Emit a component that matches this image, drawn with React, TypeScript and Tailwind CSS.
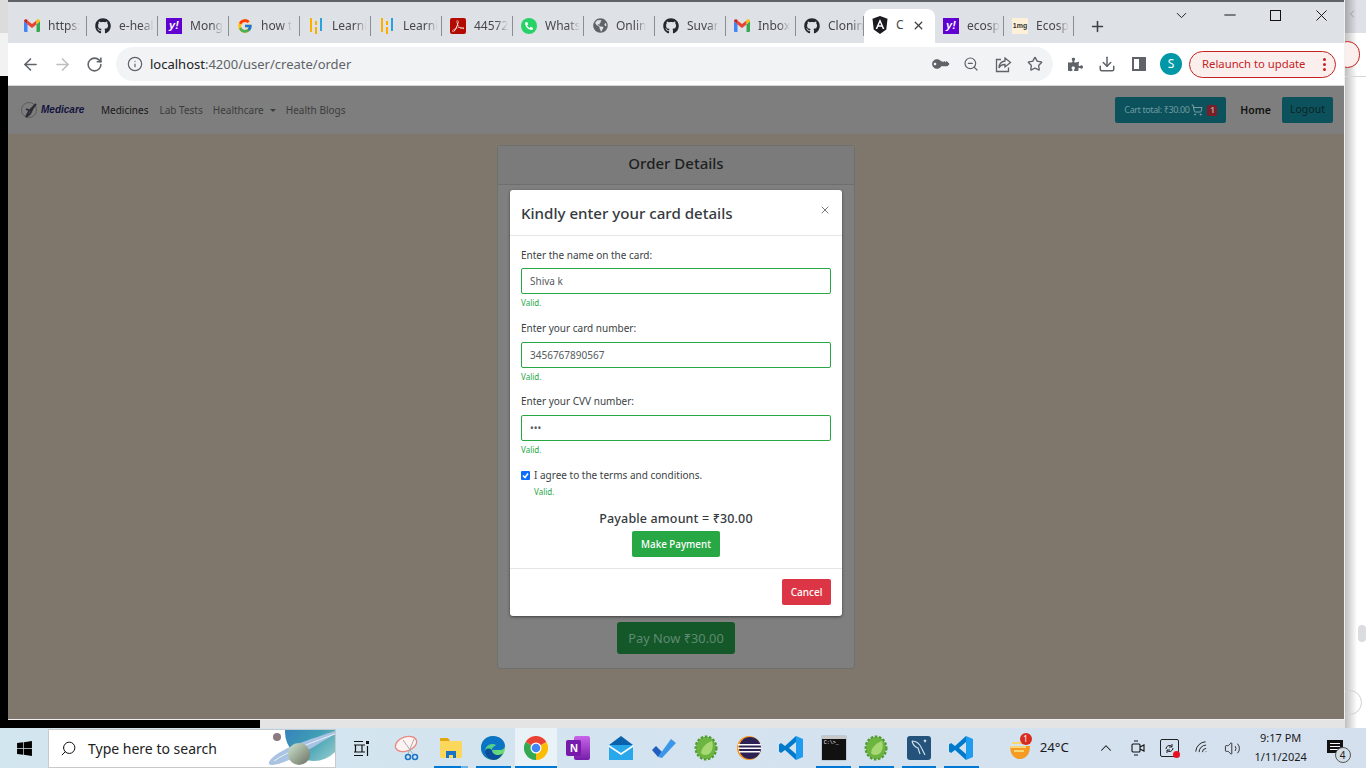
import type { ReactNode } from "react";
import {
  ArrowLeft,
  ArrowRight,
  ChevronDown,
  ChevronLeft,
  ChevronUp,
  Download,
  Info,
  Minus,
  Plus,
  RotateCw,
  Search,
  ShoppingCart,
  Star,
  Volume2,
  Wifi,
  X,
  ZoomOut,
} from "lucide-react";
import { FaGithub, FaGlobeAmericas, FaKey, FaPhoneAlt, FaPuzzlePiece, FaWindows } from "react-icons/fa";
import { FcGoogle } from "react-icons/fc";
import { SiAdobeacrobatreader } from "react-icons/si";

const FONT = "font-['Noto_Sans','Open_Sans',sans-serif]";

function GmailIcon() {
  return (
    <svg width="16" height="13" viewBox="0 0 16 13">
      <path d="M0 2v10a1 1 0 0 0 1 1h2.5V5.5z" fill="#4285f4" />
      <path d="M16 2v10a1 1 0 0 1-1 1h-2.5V5.5z" fill="#34a853" />
      <path d="M3.5 5.5 8 9l4.5-3.5V1.5L8 5 3.5 1.5z" fill="#ea4335" />
      <path d="M0 2c0-1.6 2-2.4 3.5-1.2v4.7z" fill="#c5221f" />
      <path d="M16 2c0-1.6-2-2.4-3.5-1.2v4.7z" fill="#fbbc04" />
    </svg>
  );
}

function YahooIcon() {
  return (
    <div className="w-4 h-4 bg-[#6001d2] flex items-center justify-center text-white text-[11px] font-bold italic leading-none font-['Liberation_Sans',sans-serif]">
      y!
    </div>
  );
}

function LearnIcon() {
  return (
    <svg width="12" height="16" viewBox="0 0 12 16">
      <rect x="0" y="0" width="2" height="14" fill="#fbb000" />
      <rect x="5" y="3" width="2" height="4" fill="#fbb000" />
      <rect x="5" y="9" width="2" height="7" fill="#fbb000" />
      <rect x="10" y="0" width="2" height="13" fill="#29a3e0" />
    </svg>
  );
}

function PdfIcon() {
  return (
    <div className="w-4 h-4 bg-[#b30b00] rounded-[2px] flex items-center justify-center">
      <SiAdobeacrobatreader size={12} color="#fff" />
    </div>
  );
}

function WhatsappIcon() {
  return (
    <div className="w-4 h-4 rounded-full bg-[#25d366] flex items-center justify-center">
      <FaPhoneAlt size={8} color="#fff" />
    </div>
  );
}

function AngularIcon() {
  return (
    <svg width="16" height="18" viewBox="0 0 16 18">
      <path d="M8 0 15.5 2.7 14.3 13.5 8 18 1.7 13.5.5 2.7z" fill="#1a1a1f" />
      <path d="M8 3 3.6 13h1.7l.9-2.3h3.6l.9 2.3h1.7zM6.8 9.3 8 6.4l1.2 2.9z" fill="#fff" />
    </svg>
  );
}

function OneMgIcon() {
  return (
    <div className="w-4 h-4 bg-[#fdf0d9] flex items-center justify-center text-[7px] font-bold text-[#333] leading-none font-['Liberation_Sans',sans-serif]">
      1mg
    </div>
  );
}

const TABS: { icon: ReactNode; title: string; width?: string }[] = [
  { icon: <GmailIcon />, title: "https:" },
  { icon: <FaGithub size={16} color="#24292f" />, title: "e-heal" },
  { icon: <YahooIcon />, title: "Mong" },
  { icon: <FcGoogle size={16} />, title: "how t" },
  { icon: <LearnIcon />, title: "Learni" },
  { icon: <LearnIcon />, title: "Learni" },
  { icon: <PdfIcon />, title: "44572" },
  { icon: <WhatsappIcon />, title: "Whats" },
  { icon: <FaGlobeAmericas size={15} color="#5f6368" />, title: "Onlin" },
  { icon: <FaGithub size={16} color="#24292f" />, title: "Suvar" },
  { icon: <GmailIcon />, title: "Inbox", width: "w-[70px]" },
  { icon: <FaGithub size={16} color="#24292f" />, title: "Clonin", width: "w-[68px]" },
];

function Tab({ icon, title, width = "w-[71px]" }: { icon: ReactNode; title: string; width?: string }) {
  return (
    <div className={`${width} h-[33px] flex items-center pb-[2px]`}>
      <div className="h-[20px] w-full flex items-center gap-[8px] pl-[8px] pr-[6px] border-r border-[#8a8d91]">
        <div className="w-4 flex justify-center shrink-0">{icon}</div>
        <span className="whitespace-nowrap text-[12px] text-[#45474b] [mask-image:linear-gradient(to_right,black_65%,transparent)]">
          {title}
        </span>
      </div>
    </div>
  );
}

function TabStrip() {
  return (
    <div className="h-[43px] bg-[#dee1e6] border-t-2 border-[#5f6368] flex items-end pl-2">
      {TABS.map((tab, i) => (
        <Tab key={i} {...tab} />
      ))}
      <div className="w-[71px] h-[34px] bg-white rounded-t-[8px] flex items-center pl-[8px] pr-[10px] pb-[2px] gap-[8px]">
        <AngularIcon />
        <span className="flex-1 text-[12px] text-[#45474b]">C</span>
        <X size={13} strokeWidth={2.4} className="text-[#3c4043]" />
      </div>
      <Tab icon={<YahooIcon />} title="ecosp" width="w-[69px]" />
      <Tab icon={<OneMgIcon />} title="Ecosp" width="w-[70px]" />
      <Plus size={17} strokeWidth={2.2} className="text-[#3c4043] ml-[15px] mb-[8px]" />
      <div className="ml-auto self-start flex items-center h-[26px] pr-[13px]">
        <ChevronDown size={17} strokeWidth={1.4} className="text-[#222] mr-[31px]" />
        <Minus size={18} strokeWidth={1.3} className="text-[#111] mr-[31px]" />
        <div className="w-[11px] h-[11px] border border-[#111] mr-[31px]" />
        <X size={19} strokeWidth={1.2} className="text-[#111]" />
      </div>
    </div>
  );
}

function ShareIcon() {
  return (
    <svg width="17" height="17" viewBox="0 0 17 17" fill="none" stroke="#5f6368" strokeWidth="1.3" className="-mr-px">
      <path d="M6 3.5H1.5v12h12v-4" />
      <path d="M10 2l5.5 4.5L10 11V8.5c-3 0-5 1-6 3.5 0-4 2.500-6.500 6-7z" />
    </svg>
  );
}

function Toolbar() {
  return (
    <div className="h-[43px] bg-white border-b border-[#d7d7d7] flex items-center">
      <ArrowLeft size={19} strokeWidth={2} className="text-[#5f6368] ml-[13px]" />
      <ArrowRight size={19} strokeWidth={2} className="text-[#bcbfc3] ml-[13px]" />
      <RotateCw size={17} strokeWidth={2.2} className="text-[#5f6368] ml-[14px]" />
      <div className="ml-[13px] w-[937px] h-[34px] rounded-full bg-[#f1f3f4] flex items-center pl-[11px] pr-[10px]">
        <Info size={16} strokeWidth={1.8} className="text-[#5f6368]" />
        <span className="ml-[7px] pt-px text-[13px] text-[#5f6368] whitespace-nowrap">
          <span className="text-[#202124]">localhost</span>:4200/user/create/order
        </span>
        <div className="ml-auto flex items-center gap-[16px]">
          <FaKey size={14} color="#5f6368" className="-rotate-[135deg]" />
          <ZoomOut size={16} strokeWidth={1.8} className="text-[#5f6368]" />
          <ShareIcon />
          <Star size={16} strokeWidth={2} className="text-[#5f6368]" />
        </div>
      </div>
      <FaPuzzlePiece size={15} color="#5f6368" className="ml-[15px]" />
      <Download size={18} strokeWidth={2} className="text-[#5f6368] ml-[15px]" />
      <div className="ml-[16px] w-[14px] h-[14px] border-2 border-[#5f6368] flex justify-end">
        <div className="w-[5px] bg-[#5f6368]" />
      </div>
      <div className="ml-[14px] w-[22px] h-[22px] rounded-full bg-[#0097a7] text-white text-[12px] flex items-center justify-center">
        S
      </div>
      <div className="ml-[7px] w-[147px] h-[27px] rounded-full border border-[#c5221f] bg-[#fbefee] flex items-center pl-[12px] pr-[9px] text-[11.3px] text-[#c5221f] whitespace-nowrap">
        Relaunch to update
        <div className="ml-auto flex flex-col gap-[2px]">
          <div className="w-[3px] h-[3px] rounded-full bg-[#c5221f]" />
          <div className="w-[3px] h-[3px] rounded-full bg-[#c5221f]" />
          <div className="w-[3px] h-[3px] rounded-full bg-[#c5221f]" />
        </div>
      </div>
    </div>
  );
}

function MedicareLogo() {
  return (
    <div className="flex items-center w-[65px]">
      <svg width="22" height="16" viewBox="0 0 22 16" fill="none">
        <circle cx="9" cy="8" r="7.500" stroke="#5c5c5c" strokeWidth="1" />
        <path d="M16 2 9 9l-3 6 4-3 3-6zM6 7l5 2" stroke="#2b2b33" strokeWidth="1.8" />
      </svg>
      <span className="-ml-[1px] text-[10px] font-bold italic text-[#14143f] leading-none font-['Liberation_Sans',sans-serif]">
        Medicare
      </span>
    </div>
  );
}

function Navbar() {
  return (
    <div className="h-[48px] bg-[#7e7e7e] flex items-center pl-[12px] pr-[11px] text-[10px] shrink-0">
      <MedicareLogo />
      <span className="ml-[16px] text-[#181818]">Medicines</span>
      <span className="ml-[11px] text-[#3c3c3c]">Lab Tests</span>
      <span className="ml-[10px] text-[#3c3c3c]">Healthcare</span>
      <div className="ml-[6px] w-0 h-0 border-x-[3px] border-x-transparent border-t-[3px] border-t-[#3c3c3c]" />
      <span className="ml-[10px] text-[#3c3c3c]">Health Blogs</span>
      <div className="ml-auto w-[111px] h-[26px] rounded-[2px] bg-[#0c525c] flex items-center pl-[9px] gap-[2px] text-[9px] text-[#6f9aa0] whitespace-nowrap tracking-[-0.4px]">
        Cart total: ₹30.00
        <ShoppingCart size={12} strokeWidth={1.8} className="text-[#8aa9ad]" />
        <div className="ml-[2px] w-[10px] h-[11px] rounded-[2px] bg-[#7c1d27] text-[#a8a0a0] text-[8px] font-bold flex items-center justify-center">
          1
        </div>
      </div>
      <span className="ml-[14px] pt-px font-semibold text-[#111] text-[10.5px]">Home</span>
      <div className="ml-[11px] w-[51px] h-[26px] rounded-[2px] bg-[#0c525c] text-[#0d2226] text-[10.5px] flex items-center justify-center">
        Logout
      </div>
    </div>
  );
}

function Field({
  label,
  value,
  labelGap,
  spacing,
}: {
  label: string;
  value: string;
  labelGap: string;
  spacing: string;
}) {
  return (
    <div className={spacing}>
      <div className={`h-[14px] leading-[14px] text-[10px] text-[#3b3f44] ${labelGap}`}>{label}</div>
      <div className="h-[26px] border-[1.5px] border-[#28a745] rounded-[2px] flex items-center pl-[8px] text-[10px] text-[#555b60]">
        {value}
      </div>
      <div className="mt-[3px] h-[12px] leading-[12px] text-[8px] text-[#28a745]">Valid.</div>
    </div>
  );
}

function CardModal() {
  return (
    <div className="w-[332px] h-[426px] bg-white rounded-[3px] flex flex-col shadow-[0_1px_3px_rgba(0,0,0,0.5)]">
      <div className="h-[46px] border-b border-[#e6e6e6] flex items-center justify-between pl-[11px] pr-[11px] pt-[1px] shrink-0">
        <span className="text-[15.1px] font-medium text-[#343a40]">Kindly enter your card details</span>
        <X size={12} strokeWidth={2} className="text-[#777] -mt-[7px]" />
      </div>
      <div className="px-[11px] pt-[12px] flex flex-col">
        <Field label="Enter the name on the card:" value="Shiva k" labelGap="mb-[6px]" spacing="mb-[12px]" />
        <Field label="Enter your card number:" value="3456767890567" labelGap="mb-[7px]" spacing="mb-[11px]" />
        <Field label="Enter your CVV number:" value="•••" labelGap="mb-[7px]" spacing="mb-[12.5px]" />
        <div className="h-[14px] flex items-center gap-[4px] text-[10px] text-[#3b3f44]">
          <div className="w-[9px] h-[9px] rounded-[1px] bg-[#0d6efd] flex items-center justify-center">
            <svg width="7" height="7" viewBox="0 0 7 7" fill="none" stroke="#fff" strokeWidth="1.500">
              <path d="M1 3.500 3 5.500 6 1.500" />
            </svg>
          </div>
          I agree to the terms and conditions.
        </div>
        <div className="mt-[3px] ml-[13px] h-[12px] leading-[12px] text-[8px] text-[#28a745]">Valid.</div>
        <div className="mt-[13px] h-[16px] leading-[16px] text-center text-[12.5px] tracking-[0.15px] font-medium text-[#343a40] whitespace-nowrap">
          Payable amount = ₹30.00
        </div>
        <div className="mt-[4px] flex justify-center">
          <div className="w-[88px] h-[26px] rounded-[2px] bg-[#28a745] text-white text-[9.8px] font-medium pt-[3px] flex items-center justify-center">
            Make Payment
          </div>
        </div>
      </div>
      <div className="mt-[11px] border-t border-[#e6e6e6] flex justify-end px-[11px] pt-[10px]">
        <div className="w-[49px] h-[26px] rounded-[2px] bg-[#dc3545] text-white text-[10px] font-medium pt-[2px] flex items-center justify-center">
          Cancel
        </div>
      </div>
    </div>
  );
}

function Page() {
  return (
    <div className="relative flex-1 bg-[#7f766c] flex flex-col min-h-0">
      <Navbar />
      <div className="flex justify-center pt-[11px]">
        <div className="w-[358px] h-[524px] bg-[#7f7f7f] border border-[#6f6f6f] rounded-[3px] flex flex-col">
          <div className="h-[39px] bg-[#7b7b7b] border-b border-[#6e6e6e] flex items-center justify-center pb-[4px] text-[15px] font-medium text-[#1d1f21] shrink-0">
            Order Details
          </div>
          <div className="flex-1 flex items-end justify-center pb-[14px]">
            <div className="w-[118px] h-[32px] rounded-[3px] bg-[#14582a] text-[#5f8a70] text-[12.8px] pt-px flex items-center justify-center whitespace-nowrap">
              Pay Now ₹30.00
            </div>
          </div>
        </div>
      </div>
      {/* modal sits over the order card */}
      <div className="absolute inset-x-0 top-[104px] flex justify-center">
        <CardModal />
      </div>
    </div>
  );
}

function RightEdge() {
  return (
    <div className="relative flex-1 flex flex-col overflow-hidden">
      <div className="h-[33px] bg-[#dee1e6] shrink-0" />
      <div className="flex-1 bg-white" />
      <div className="absolute inset-y-0 left-0 w-[12px] bg-gradient-to-r from-[#00000040] to-transparent" />
      <ChevronLeft size={12} strokeWidth={1.5} className="absolute left-[1px] top-[8px] text-[#8a8d91]" />
      <div className="absolute -left-[10px] top-[41px] w-[25px] h-[27px] rounded-full border border-[#c5221f] bg-[#fbefee]" />
      <div className="absolute left-0 right-0 top-[76px] h-px bg-[#d8d8d8]" />
      <div className="absolute left-[13px] top-[625px] w-[8px] h-[17px] rounded-[4px] bg-[#dadce0]" />
      <div className="absolute -left-[8px] top-[690px] w-[25px] h-[25px] rounded-full border border-[#d0d0d0]" />
    </div>
  );
}

function SnipIcon() {
  return (
    <svg width="28" height="28" viewBox="0 0 28 28" fill="none">
      <ellipse cx="12" cy="10" rx="11" ry="7" fill="#fdf3f1" stroke="#e88a83" strokeWidth="1.300" transform="rotate(-20 12 10)" />
      <path d="M9 6 19 20M20 5 14 20" stroke="#a8adb2" strokeWidth="1" />
      <circle cx="14" cy="23" r="2.500" stroke="#1d76c4" strokeWidth="1.600" />
      <circle cx="21" cy="23" r="2.500" stroke="#1d76c4" strokeWidth="1.600" />
    </svg>
  );
}

function ExplorerIcon() {
  return (
    <svg width="24" height="22" viewBox="0 0 24 22">
      <path d="M1 2a1 1 0 0 1 1-1h7l2 3H1z" fill="#e2a70f" />
      <rect x="1" y="4" width="22" height="17" rx="1" fill="#fbd75b" />
      <path d="M7 21v-7h10v7h-3v-3h-4v3z" fill="#1a73c6" />
    </svg>
  );
}

function EdgeIcon() {
  return (
    <svg width="24" height="24" viewBox="0 0 24 24">
      <defs>
        <linearGradient id="edge-a" x1="0" y1="0" x2="1" y2="1">
          <stop offset="0" stopColor="#36c5a0" />
          <stop offset="1" stopColor="#7fe06a" />
        </linearGradient>
      </defs>
      <circle cx="12" cy="12" r="12" fill="url(#edge-a)" />
      <path d="M0 12C0 5 5 0 12 0c6 0 12 4 12 10 0 2-2 4-5 4H11c0-3 3-4 4-5-3-2-11-1-11 7 0 4 4 8 9 8C6 24 0 19 0 12z" fill="#0c74c4" />
      <path d="M11 14c0 3 3 5 6 5 2 0 4-1 5-2-2 4-5 7-9 7-5 0-9-4-9-8 0-3 3-5 7-2z" fill="#0a4f9c" />
    </svg>
  );
}

function ChromeIcon() {
  return (
    <svg width="24" height="24" viewBox="0 0 24 24">
      <path d="M12 12 1.600 6A12 12 0 0 1 22.400 6z" fill="#ea4335" />
      <path d="M12 12 22.400 6A12 12 0 0 1 12 24z" fill="#fbbc04" />
      <path d="M12 12 12 24A12 12 0 0 1 1.600 6z" fill="#34a853" />
      <circle cx="12" cy="12" r="5.500" fill="#fff" />
      <circle cx="12" cy="12" r="4.300" fill="#4285f4" />
    </svg>
  );
}

function OneNoteIcon() {
  return (
    <div className="relative w-[24px] h-[24px]">
      <div className="absolute right-0 inset-y-0 w-[16px] rounded-[2px] bg-gradient-to-b from-[#ca64ea] to-[#7719aa]" />
      <div className="absolute left-0 top-[4px] w-[15px] h-[16px] rounded-[2px] bg-[#7719aa] text-white text-[11px] font-bold flex items-center justify-center font-['Liberation_Sans',sans-serif]">
        N
      </div>
    </div>
  );
}

function MailIcon() {
  return (
    <svg width="24" height="24" viewBox="0 0 24 24">
      <path d="M0 9 12 0l12 9v2H0z" fill="#0a62ad" />
      <rect x="0" y="9" width="24" height="15" fill="#28a8ea" />
      <path d="M0 9 12 17 24 9v2L12 19 0 11z" fill="#fff" />
    </svg>
  );
}

function TodoIcon() {
  return (
    <svg width="24" height="20" viewBox="0 0 24 20">
      <path d="M0 12 4 8l6 6-4 5z" fill="#1f5fbf" />
      <path d="M6 19 19 1l5 4L10 20z" fill="#3d97e8" />
    </svg>
  );
}

function SpringIcon() {
  return (
    <svg width="24" height="26" viewBox="0 0 24 26">
      <ellipse cx="12" cy="13" rx="10" ry="11" fill="#5fa83a" stroke="#4f9a2d" strokeWidth="3" strokeDasharray="2.500 1.500" />
      <ellipse cx="12" cy="13" rx="9.500" ry="10.500" fill="#6cb541" />
      <path d="M18 6c2 6 0 14-7 14-2 0-3-1-4-2 1-7 6-10 11-12z" fill="#a6d873" />
    </svg>
  );
}

function EclipseIcon() {
  return (
    <svg width="24" height="24" viewBox="0 0 24 24">
      <circle cx="12" cy="12" r="12" fill="#f79720" />
      <circle cx="13" cy="12" r="11" fill="#2c2255" />
      <rect x="1" y="8" width="23" height="1.500" fill="#fff" />
      <rect x="1" y="11.500" width="23" height="1.500" fill="#fff" />
      <rect x="2" y="15" width="21" height="1.500" fill="#fff" />
    </svg>
  );
}

function VsCodeIcon() {
  return (
    <svg width="24" height="24" viewBox="0 0 24 24">
      <path d="M17 0 24 3v18l-7 3z" fill="#1f9cf0" />
      <path d="M17 0 6 10 2 7 0 8.500v7L2 17l4-3 11 10v-6l-7-6 7-6z" fill="#007acc" />
    </svg>
  );
}

function CmdIcon() {
  return (
    <div className="w-[24px] h-[24px] bg-[#111] border-t-[3px] border-[#c8c8c8] shadow-[0_0_1px_#555] pl-[2px] pt-[2px]">
      <div className="text-[5px] leading-none text-white font-['Liberation_Mono',monospace]">C:\&gt;_</div>
    </div>
  );
}

function MySqlIcon() {
  return (
    <div className="w-[24px] h-[24px] rounded-[3px] bg-[#24527a] flex items-center justify-center">
      <svg width="20" height="20" viewBox="0 0 20 20" fill="none" stroke="#d5e4ee" strokeWidth="1.100">
        <path d="M3 3c5 0 8 3 10 8l3 6M3 3c1 4 3 6 6 7l2 6" />
        <path d="M15 2l2 2M17 2l-2 2" />
      </svg>
    </div>
  );
}

function PlanetArt() {
  return (
    <svg width="67" height="38" viewBox="0 0 67 38" className="shrink-0">
      <defs>
        <linearGradient id="planet-big" x1="0" y1="0" x2="1" y2="1">
          <stop offset="0" stopColor="#2f6fc0" />
          <stop offset="0.550" stopColor="#3f9db5" />
          <stop offset="1" stopColor="#a8d8d0" />
        </linearGradient>
        <linearGradient id="planet-small" x1="0" y1="0" x2="1" y2="1">
          <stop offset="0" stopColor="#cfe6cf" />
          <stop offset="1" stopColor="#6b6f62" />
        </linearGradient>
      </defs>
      <circle cx="46" cy="3" r="29" fill="url(#planet-big)" />
      <path d="M1 33C8 20 44 10 67 2v3C50 15 22 34 5 36 2 36 0 35 1 33z" fill="#a9c3e3" />
      <path d="M6 32C20 22 48 12 67 5" stroke="#e8f0f8" strokeWidth="1" fill="none" />
      <circle cx="9" cy="8" r="4" fill="#8b7a80" />
      <circle cx="31" cy="25" r="11" fill="url(#planet-small)" />
    </svg>
  );
}

const TASK_ICONS: { icon: ReactNode; run?: "on" | "active" | "group" }[] = [
  { icon: <SnipIcon /> },
  { icon: <ExplorerIcon />, run: "group" },
  { icon: <EdgeIcon />, run: "on" },
  { icon: <ChromeIcon />, run: "active" },
  { icon: <OneNoteIcon /> },
  { icon: <MailIcon /> },
  { icon: <TodoIcon /> },
  { icon: <SpringIcon /> },
  { icon: <EclipseIcon /> },
  { icon: <VsCodeIcon /> },
  { icon: <CmdIcon />, run: "on" },
  { icon: <SpringIcon />, run: "on" },
  { icon: <MySqlIcon />, run: "on" },
  { icon: <VsCodeIcon />, run: "on" },
];

function TaskSlot({ icon, run }: { icon: ReactNode; run?: "on" | "active" | "group" }) {
  return (
    <div className={`relative w-[42.55px] h-full flex items-center justify-center ${run === "active" ? "bg-[#e9f2f6]" : ""}`}>
      {icon}
      {run && (
        <div
          className={`absolute bottom-0 h-[2px] bg-[#0078d4] ${run === "active" ? "inset-x-0" : "inset-x-[4px]"} ${
            run === "group" ? "border-r-[7px] border-[#6cb2e6]" : ""
          }`}
        />
      )}
    </div>
  );
}

function Taskbar() {
  return (
    <div className="h-[40px] bg-gradient-to-r from-[#d2e6f0] to-[#d5e0ee] flex items-center text-[#1b1b1b] shrink-0">
      <div className="w-[48px] flex justify-center">
        <FaWindows size={17} color="#000" />
      </div>
      <div className="w-[288px] h-[39px] bg-white border border-[#c9c9c9] flex items-center pl-[11px] overflow-hidden">
        <Search size={17} strokeWidth={1.4} className="-scale-x-100 text-[#111]" />
        <span className="ml-[11px] text-[14px] text-[#222] whitespace-nowrap">Type here to search</span>
        <div className="ml-auto">
          <PlanetArt />
        </div>
      </div>
      <div className="w-[51px] flex justify-center">
        <svg width="17" height="17" viewBox="0 0 17 17" fill="none" stroke="#111" strokeWidth="1.200">
          <path d="M1 1.500h9M1 15.500h9M2.500 5h6.500v7H2.500zM1 5h11M1 12h11" />
          <rect x="13" y="1" width="3" height="3" fill="#111" stroke="none" />
          <path d="M14.500 6v10" />
        </svg>
      </div>
      <div className="h-full flex">
        {TASK_ICONS.map((slot, i) => (
          <TaskSlot key={i} {...slot} />
        ))}
      </div>
      <div className="relative ml-[25px] w-[24px] h-[24px]">
        <svg width="24" height="24" viewBox="0 0 24 24">
          <path d="M2 10h20c0 8-4 13-10 13S2 18 2 10z" fill="#f59a23" />
          <path d="M4 7h11M2 11h16M6 15h10" stroke="#f7d774" strokeWidth="2" />
        </svg>
        <div className="absolute -top-[3px] left-[12px] w-[12px] h-[12px] rounded-full bg-[#d92c20] text-white text-[8px] flex items-center justify-center">
          1
        </div>
      </div>
      <span className="ml-[8px] w-[30px] text-[13.3px] whitespace-nowrap">24°C</span>
      <ChevronUp size={18} strokeWidth={1.4} className="ml-[27px]" />
      <svg width="14" height="18" viewBox="0 0 14 18" fill="none" stroke="#111" strokeWidth="1.100" className="ml-[16px]">
        <rect x="1" y="5" width="8" height="8" rx="1" />
        <path d="M9 8l4-2v6l-4-2M3 2h4M3 16h4" />
      </svg>
      <div className="relative ml-[15px] w-[19px] h-[18px] border border-[#222] rounded-[2px] flex items-center justify-center">
        <svg width="11" height="11" viewBox="0 0 11 11" fill="none" stroke="#222" strokeWidth="1">
          <path d="M2 6a3.500 3.500 0 0 1 6-2.500M9 5a3.500 3.500 0 0 1-6 2.500M8 1v3H5M3 10V7h3" />
        </svg>
        <div className="absolute right-[-2px] bottom-[-2px] w-[7px] h-[7px] rounded-full bg-[#e81123]" />
      </div>
      <Wifi size={16} strokeWidth={1.3} className="ml-[15px] rotate-[-45deg]" />
      <Volume2 size={17} strokeWidth={1.2} className="ml-[14px]" />
      <div className="ml-[12px] -mt-[2px] w-[56px] flex flex-col items-center text-[11px] leading-[19px] whitespace-nowrap">
        <span>9:17 PM</span>
        <span>1/11/2024</span>
      </div>
      <div className="relative ml-[18px] w-[16px] h-[13px] -mt-[3px] bg-[#111] flex flex-col justify-center gap-[2px] px-[3px]">
        <div className="h-px bg-white" />
        <div className="h-px bg-white" />
        <div className="h-px bg-white" />
        <div className="absolute -right-[8px] -bottom-[10px] w-[16px] h-[16px] rounded-full bg-[#d3dde8] border border-[#555] text-[10px] flex items-center justify-center">
          4
        </div>
      </div>
    </div>
  );
}

export default function App() {
  return (
    <div className={`w-[1366px] h-[768px] overflow-hidden flex flex-col bg-white ${FONT}`}>
      <div className="h-[728px] flex shrink-0">
        {/* sliver of the window behind, on the left */}
        <div className="w-2 flex flex-col shrink-0">
          <div className="h-[33px] bg-[#dcdcdc]" />
          <div className="h-[43px] bg-[#f2f2f2]" />
          <div className="flex-1 bg-black" />
        </div>
        <div className="w-[1337px] flex flex-col shrink-0">
          <div className="h-[720px] flex flex-col border-r border-b border-[#f0f0f0]">
            <TabStrip />
            <Toolbar />
            <Page />
          </div>
          <div className="flex-1 flex">
            <div className="w-[252px] bg-black" />
            <div className="flex-1 bg-[#e4e4e4]" />
          </div>
        </div>
        <RightEdge />
      </div>
      <Taskbar />
    </div>
  );
}
